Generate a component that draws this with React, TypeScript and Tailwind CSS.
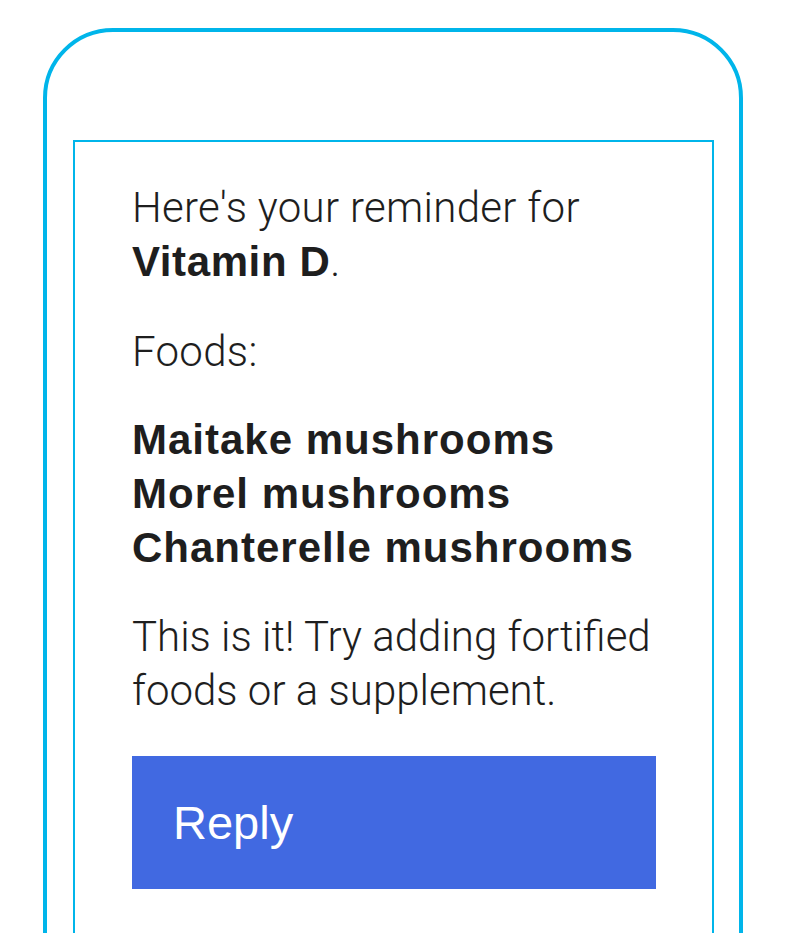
export default function App() {
  return (
    <div className="flex justify-center pt-[28px] bg-white min-h-[933px] overflow-hidden h-[933px]">
      <div className="w-[700px] h-[1100px] shrink-0 border-4 border-[#00b5ea] rounded-t-[70px] pl-[26px] pr-[25px] pt-[108px]">
        <div className="h-[1000px] border-2 border-b-0 border-[#00b5ea] pl-[57px] pr-[56px] pt-[39px] text-[#1e1e1e] font-['Roboto',_'Liberation_Sans',_sans-serif] text-[42px] leading-[54px]">
          <p className="font-light tracking-[0.3px]">
            Here's your reminder for{" "}
            <span className="font-bold tracking-[0.6px] font-['Liberation_Sans',_Arial,_sans-serif]">Vitamin D</span>.
          </p>
          <p className="font-light tracking-[0.3px] mt-[36px]">Foods:</p>
          <div className="font-bold tracking-[1px] mt-[34px] font-['Liberation_Sans',_Arial,_sans-serif]">
            <div>Maitake mushrooms</div>
            <div>Morel mushrooms</div>
            <div>Chanterelle mushrooms</div>
          </div>
          <p className="font-light mt-[35px]">This is it! Try adding fortified foods or a supplement.</p>
          <div className="mt-[38px] h-[133px] bg-[#4169e1] flex items-center pl-[41px] text-white font-normal text-[47px] font-['Liberation_Sans',_Arial,_sans-serif]">
            Reply
          </div>
        </div>
      </div>
    </div>
  );
}
